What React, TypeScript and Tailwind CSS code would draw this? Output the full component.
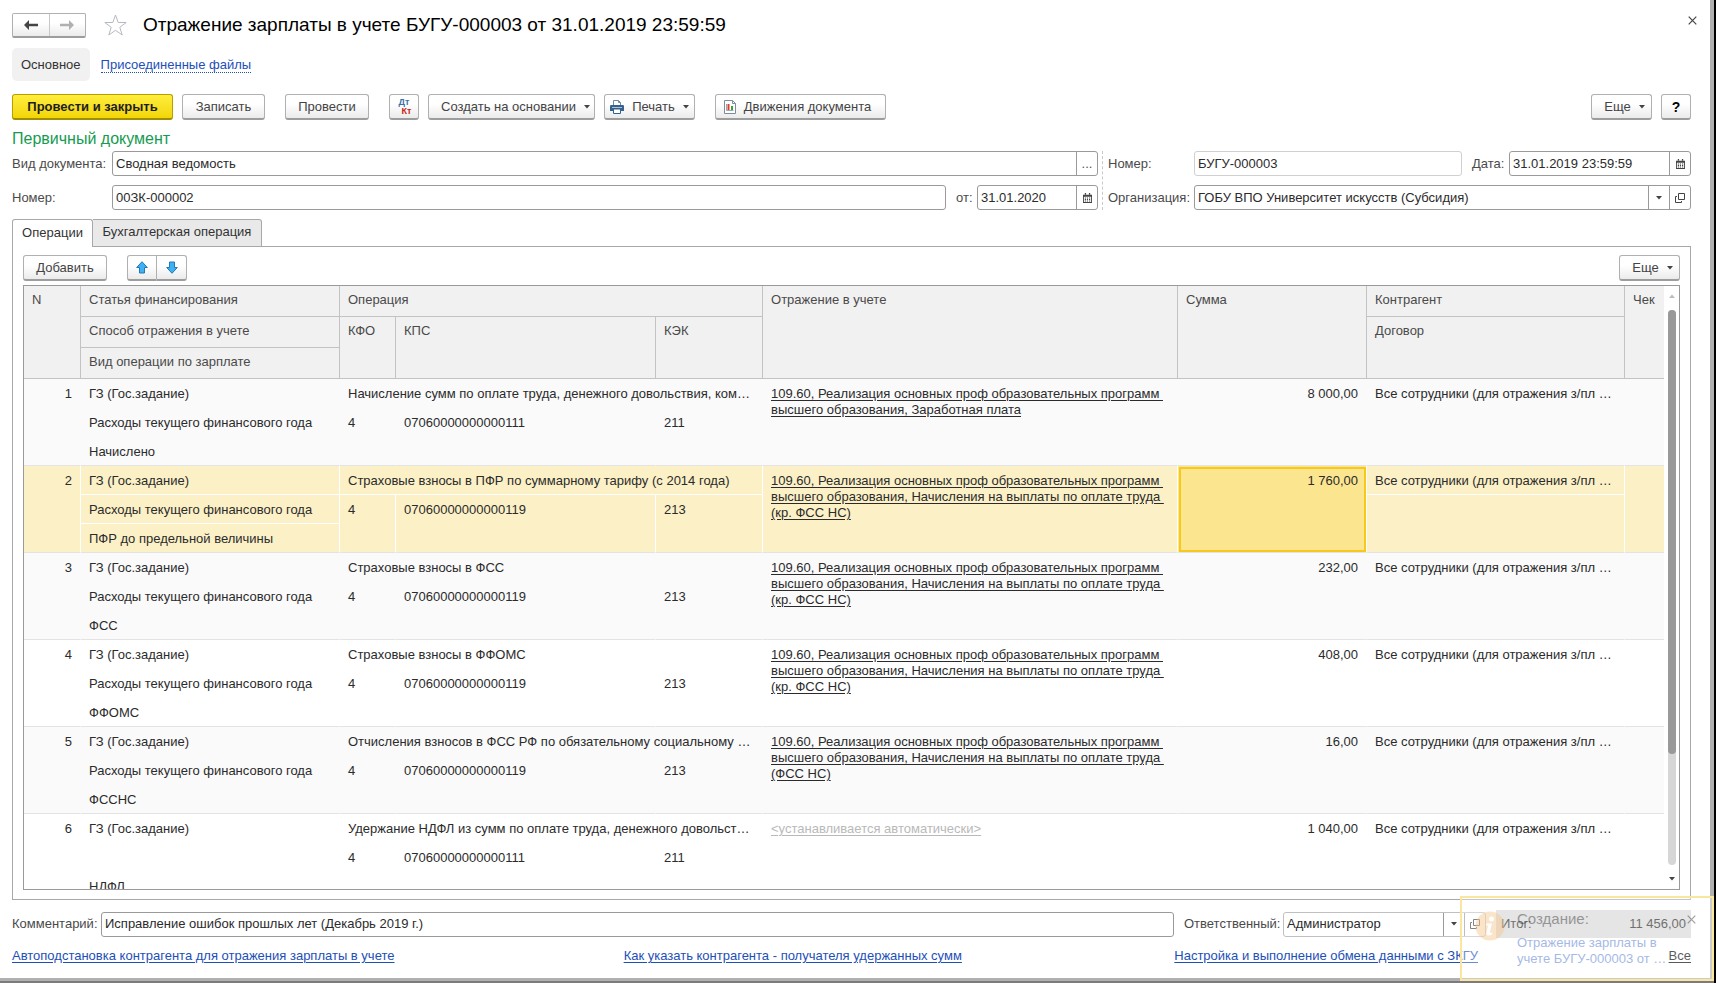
import { useState, type ReactNode } from "react";

type Entry = {
  n: number;
  article: string;
  method: string;
  kind: string;
  operation: string;
  kfo: string;
  kps: string;
  kek: string;
  posting: string;
  amount: string;
  contractor: string;
};

const PROGRAM = "109.60, Реализация основных проф образовательных программ \nвысшего образования, ";
const CONTRACTOR = "Все сотрудники (для отражения з/пл …";

const entries: Entry[] = [
  { n: 1, article: "ГЗ (Гос.задание)", method: "Расходы текущего финансового года", kind: "Начислено", operation: "Начисление сумм по оплате труда, денежного довольствия, ком…", kfo: "4", kps: "07060000000000111", kek: "211", posting: PROGRAM + "Заработная плата", amount: "8 000,00", contractor: CONTRACTOR },
  { n: 2, article: "ГЗ (Гос.задание)", method: "Расходы текущего финансового года", kind: "ПФР до предельной величины", operation: "Страховые взносы в ПФР по суммарному тарифу (с 2014 года)", kfo: "4", kps: "07060000000000119", kek: "213", posting: PROGRAM + "Начисления на выплаты по оплате труда \n(кр. ФСС НС)", amount: "1 760,00", contractor: CONTRACTOR },
  { n: 3, article: "ГЗ (Гос.задание)", method: "Расходы текущего финансового года", kind: "ФСС", operation: "Страховые взносы в ФСС", kfo: "4", kps: "07060000000000119", kek: "213", posting: PROGRAM + "Начисления на выплаты по оплате труда \n(кр. ФСС НС)", amount: "232,00", contractor: CONTRACTOR },
  { n: 4, article: "ГЗ (Гос.задание)", method: "Расходы текущего финансового года", kind: "ФФОМС", operation: "Страховые взносы в ФФОМС", kfo: "4", kps: "07060000000000119", kek: "213", posting: PROGRAM + "Начисления на выплаты по оплате труда \n(кр. ФСС НС)", amount: "408,00", contractor: CONTRACTOR },
  { n: 5, article: "ГЗ (Гос.задание)", method: "Расходы текущего финансового года", kind: "ФССНС", operation: "Отчисления взносов в ФСС РФ по обязательному социальному …", kfo: "4", kps: "07060000000000119", kek: "213", posting: PROGRAM + "Начисления на выплаты по оплате труда \n(ФСС НС)", amount: "16,00", contractor: CONTRACTOR },
  { n: 6, article: "ГЗ (Гос.задание)", method: "", kind: "НДФЛ", operation: "Удержание НДФЛ из сумм по оплате труда, денежного довольст…", kfo: "4", kps: "07060000000000111", kek: "211", posting: "", amount: "1 040,00", contractor: CONTRACTOR },
];

const buttonLook =
  "flex h-[26px] shrink-0 items-center justify-center whitespace-nowrap rounded-[3px] border border-[#b0b0b0] border-b-2 border-b-[#9d9d9d] bg-linear-to-b from-white from-40% to-[#ebebeb] text-[#444]";

function Button({ className = "", label, children }: { className?: string; label?: string; children: ReactNode }) {
  return (
    <button type="button" aria-label={label} className={`${buttonLook} ${className}`}>
      {children}
    </button>
  );
}

function Caret() {
  return (
    <svg width="6" height="4" viewBox="0 0 6 4" className="shrink-0" aria-hidden="true">
      <path d="M0 0h6L3 3.6z" fill="#444" />
    </svg>
  );
}

function CalendarIcon() {
  return (
    <svg width="9" height="10" viewBox="0 0 10 11" aria-hidden="true">
      <path d="M0 2h10v9H0z" fill="#444" />
      <path d="M2 0h1.4v2H2zM6.6 0H8v2H6.6z" fill="#444" />
      <path d="M1 4h8v6H1z" fill="#fff" />
      <path d="M2 5h1.3v1H2zM4.3 5h1.3v1H4.3zM6.7 5H8v1H6.7zM2 6.7h1.3v1H2zM4.3 6.7h1.3v1H4.3zM6.7 6.7H8v1H6.7zM2 8.3h1.3v1H2zM4.3 8.3h1.3v1H4.3zM6.7 8.3H8v1H6.7z" fill="#444" />
    </svg>
  );
}

function OpenIcon() {
  return (
    <svg width="10" height="10" viewBox="0 0 10 10" fill="none" stroke="#444" aria-hidden="true">
      <path d="M3.5 .5h6v6h-6z" />
      <path d="M2 3.5H.5v6h6V8" />
    </svg>
  );
}

function CrossIcon({ color }: { color: string }) {
  return (
    <svg width="9" height="9" viewBox="0 0 9 9" fill="none" stroke={color} strokeWidth="1.2" aria-hidden="true">
      <path d="M.7.7l7.6 7.6M8.3.7L.7 8.3" />
    </svg>
  );
}

function PrinterIcon() {
  return (
    <svg width="14" height="14" viewBox="0 0 14 14" aria-hidden="true">
      <path d="M3.5 6V.5h5L10.500 2.500V6" fill="#fff" stroke="#6f8aa3" />
      <path d="M8.500 .5v2h2" fill="none" stroke="#6f8aa3" />
      <path d="M1.200 5h11.600q1.200 0 1.200 1.200V11H0V6.200Q0 5 1.200 5z" fill="#35618e" />
      <path d="M2 7h10v1H2z" fill="#a9c3dc" />
      <path d="M3.500 9h7v4.500h-7z" fill="#fff" stroke="#35618e" />
    </svg>
  );
}

function ReportIcon() {
  return (
    <svg width="12" height="14" viewBox="0 0 12 14" aria-hidden="true">
      <path d="M.5 .5h8L11.500 3.500v10H.5z" fill="#fff" stroke="#7c8c9b" />
      <path d="M8.500 .5v3h3" fill="none" stroke="#7c8c9b" />
      <path d="M2.500 4v6.500h7" fill="none" stroke="#9aa6b0" />
      <path d="M3.500 4h2v6h-2z" fill="#e5382a" />
      <path d="M7 6h2v4H7z" fill="#35a23c" />
    </svg>
  );
}

function FieldButton({ label, children }: { label: string; children: ReactNode }) {
  return (
    <button type="button" aria-label={label} className="flex w-[21px] shrink-0 items-center justify-center border-l border-[#9a9a9a] text-[#555]">
      {children}
    </button>
  );
}

function Field({ id, value, className, look = "border-[#9a9a9a]", children }: { id: string; value: string; className: string; look?: string; children?: ReactNode }) {
  return (
    <div className={`flex h-[25px] overflow-hidden rounded-[3px] border bg-white ${look} ${className}`}>
      <input id={id} type="text" defaultValue={value} className="min-w-0 flex-1 px-[3px] text-[#2b2b2b] outline-none" />
      {children}
    </div>
  );
}

function HeadCell({ children, rows = 1, cols = 1, last = false }: { children: ReactNode; rows?: number; cols?: number; last?: boolean }) {
  return (
    <th
      rowSpan={rows}
      colSpan={cols}
      className={`h-[31px] border-b border-[#c3c3c3] bg-[#f1f1f1] px-2 pt-1.5 text-left align-top font-normal ${last ? "" : "border-r"}`}
    >
      {children}
    </th>
  );
}

function EntryRows({ entry, selected, onSelect }: { entry: Entry; selected: boolean; onSelect: () => void }) {
  const tone = selected ? "bg-[#fcf1c6]" : entry.n % 2 ? "bg-[#fafafa]" : "bg-white";
  const inner = selected ? "border-r border-b border-white" : "border-r border-b border-transparent";
  const outer = selected ? "border-r border-b border-r-white border-b-[#e3e3e3]" : "border-r border-b border-r-transparent border-b-[#e3e3e3]";
  const cell = "h-[29px] px-2 pt-[7px] align-top whitespace-nowrap overflow-hidden";
  return (
    <tbody className={tone} onClick={onSelect}>
      <tr>
        <td rowSpan={3} className={`${cell} ${outer} text-right`}>{entry.n}</td>
        <td className={`${cell} ${inner}`}>{entry.article}</td>
        <td colSpan={3} className={`${cell} ${inner}`}>{entry.operation}</td>
        <td rowSpan={3} className={`${cell} ${outer}`}>
          {entry.posting ? (
            <a href="#posting" className="whitespace-pre underline underline-offset-2">{entry.posting}</a>
          ) : (
            <a href="#posting" className="text-[#b9b9b9] underline underline-offset-2">&lt;устанавливается автоматически&gt;</a>
          )}
        </td>
        <td rowSpan={3} className={`${cell} ${outer} text-right ${selected ? "bg-[#fbe58e] outline-2 -outline-offset-3 outline-[#f7c91c]" : ""}`}>{entry.amount}</td>
        <td className={`${cell} ${inner}`}>{entry.contractor}</td>
        <td rowSpan={3} className={`${cell} border-b border-[#e3e3e3]`} />
      </tr>
      <tr>
        <td className={`${cell} ${inner}`}>{entry.method}</td>
        <td rowSpan={2} className={`${cell} ${outer}`}>{entry.kfo}</td>
        <td rowSpan={2} className={`${cell} ${outer}`}>{entry.kps}</td>
        <td rowSpan={2} className={`${cell} ${outer}`}>{entry.kek}</td>
        <td rowSpan={2} className={`${cell} ${outer}`} />
      </tr>
      <tr>
        <td className={`${cell} ${outer}`}>{entry.kind}</td>
      </tr>
    </tbody>
  );
}

function EntriesTable() {
  const [selected, setSelected] = useState(2);
  return (
    <div className="mt-1 flex min-h-0 flex-1 border border-[#9a9a9a]">
      <div className="min-w-0 flex-1 overflow-hidden">
        <table className="w-full table-fixed border-separate border-spacing-0 leading-4 text-[#2b2b2b]">
          <colgroup>
            <col className="w-[57px]" />
            <col className="w-[259px]" />
            <col className="w-[56px]" />
            <col className="w-[260px]" />
            <col className="w-[107px]" />
            <col />
            <col className="w-[189px]" />
            <col className="w-[258px]" />
            <col className="w-[39px]" />
          </colgroup>
          <thead className="text-[#4a4a4a]">
            <tr>
              <HeadCell rows={3}>N</HeadCell>
              <HeadCell>Статья финансирования</HeadCell>
              <HeadCell cols={3}>Операция</HeadCell>
              <HeadCell rows={3}>Отражение в учете</HeadCell>
              <HeadCell rows={3}>Сумма</HeadCell>
              <HeadCell>Контрагент</HeadCell>
              <HeadCell rows={3} last>Чек</HeadCell>
            </tr>
            <tr>
              <HeadCell>Способ отражения в учете</HeadCell>
              <HeadCell rows={2}>КФО</HeadCell>
              <HeadCell rows={2}>КПС</HeadCell>
              <HeadCell rows={2}>КЭК</HeadCell>
              <HeadCell rows={2}>Договор</HeadCell>
            </tr>
            <tr>
              <HeadCell>Вид операции по зарплате</HeadCell>
            </tr>
          </thead>
          {entries.map((entry) => (
            <EntryRows key={entry.n} entry={entry} selected={entry.n === selected} onSelect={() => setSelected(entry.n)} />
          ))}
        </table>
      </div>
      <div className="flex w-[15px] shrink-0 flex-col items-center py-2">
        <svg width="6" height="4" viewBox="0 0 6 4" aria-hidden="true">
          <path d="M0 4h6L3 .4z" fill="#bdbdbd" />
        </svg>
        <div className="my-3 w-2 flex-1 rounded-full bg-[#d6d6d6]">
          <div className="h-4/5 rounded-full bg-[#999]" />
        </div>
        <Caret />
      </div>
    </div>
  );
}

function Notification() {
  return (
    <div className="absolute right-0.5 bottom-0.5 h-[85px] w-[254px] border-2 border-[#fbe6a0] bg-white/35">
      <div className="flex gap-3 pt-[11px] pl-[13px] opacity-45">
        <svg width="30" height="30" viewBox="0 0 30 30" className="mt-0.5 shrink-0" aria-hidden="true">
          <circle cx="15" cy="15" r="14.500" fill="#f6c48c" />
          <circle cx="16.500" cy="8" r="2.500" fill="#fff" />
          <path d="M11.500 12.500h5.500l-2 8.500q0 1.500 2.500.5l-.5 2q-6.500 2.500-5.500-2l1.500-7h-2z" fill="#fff" />
        </svg>
        <div>
          <div className="text-[15px] leading-5 text-[#333]">Создание:</div>
          <a href="#document" className="mt-1.5 block leading-4 text-[#3465c8]">
            Отражение зарплаты в<br />учете БУГУ-000003 от …
          </a>
        </div>
      </div>
      <button type="button" aria-label="Закрыть уведомление" className="absolute top-[17px] right-4 opacity-50">
        <CrossIcon color="#444" />
      </button>
    </div>
  );
}

export default function App() {
  const link = "text-[#1d4fb8] underline underline-offset-2";
  return (
    <div className="relative h-screen bg-black pr-0.5 font-['Liberation_Sans',Arial,sans-serif] text-[13px] leading-4">
      <div className="h-full border-b-2 border-[#7b7b7b]">
        <div className="flex h-full flex-col border-r-4 border-b-3 border-[#b0b0b0] bg-white pt-3 pr-[19px] pl-3">
          <header className="flex items-center">
            <div className="flex h-[25px] w-[74px] rounded-[2px] border border-[#b0b0b0] border-b-2 border-b-[#9d9d9d] bg-linear-to-b from-white from-40% to-[#ebebeb]">
              <button type="button" aria-label="Назад" className="flex flex-1 items-center justify-center border-r border-[#c8c8c8]">
                <svg width="14" height="10" viewBox="0 0 14 10" aria-hidden="true">
                  <path d="M0 5l5-5v3.700h9v2.600H5V10z" fill="#444" />
                </svg>
              </button>
              <button type="button" aria-label="Вперед" className="flex flex-1 items-center justify-center">
                <svg width="14" height="10" viewBox="0 0 14 10" aria-hidden="true">
                  <path d="M14 5L9 0v3.700H0v2.600h9V10z" fill="#b0b0b0" />
                </svg>
              </button>
            </div>
            <button type="button" aria-label="Добавить в избранное" className="ml-[17px]">
              <svg width="25" height="24" viewBox="0 0 25 24" fill="none" stroke="#b4bac2" aria-hidden="true">
                <path d="M12.500 2l2.700 7.500h8l-6.400 4.800 2.400 7.700-6.700-4.700L5.800 22l2.400-7.700L1.800 9.500h8z" />
              </svg>
            </button>
            <h1 className="ml-[15px] text-[19px] leading-[26px] text-black">Отражение зарплаты в учете БУГУ-000003 от 31.01.2019 23:59:59</h1>
            <button type="button" aria-label="Закрыть" className="mt-1 mr-[-6px] ml-auto self-start">
              <CrossIcon color="#444" />
            </button>
          </header>

          <nav className="mt-2.5 flex items-center">
            <a href="#main" className="flex h-[33px] items-center rounded-[5px] bg-[#f1f1f1] px-[9px] text-[#333]">Основное</a>
            <a href="#files" className="ml-[11px] border-b border-dotted border-[#1d4fb8] leading-[15px] text-[#1d4fb8]">Присоединенные файлы</a>
          </nav>

          <div className="mt-[13px] flex">
            <button
              type="button"
              className="flex h-[26px] w-[161px] items-center justify-center rounded-[3px] border border-[#b5a000] border-b-2 border-b-[#a08e00] bg-linear-to-b from-[#ffee3a] to-[#f2d600] font-bold text-[#1e1e1e]"
            >
              Провести и закрыть
            </button>
            <Button className="ml-[9px] w-[83px]">Записать</Button>
            <Button className="ml-5 w-[84px]">Провести</Button>
            <Button className="ml-5 w-[30px]" label="Дт/Кт">
              <span className="flex w-[15px] flex-col text-[9px] leading-[9px] font-bold">
                <span className="text-[#3a6ea5]">Дт</span>
                <span className="text-right text-[#c81e14]">Кт</span>
              </span>
            </Button>
            <Button className="ml-[9px] w-[167px] gap-2 pl-2">
              Создать на основании
              <Caret />
            </Button>
            <Button className="ml-[9px] w-[91px] gap-2">
              <PrinterIcon />
              Печать
              <Caret />
            </Button>
            <Button className="ml-5 w-[171px] gap-2 pr-1.5">
              <ReportIcon />
              Движения документа
            </Button>
            <Button className="ml-auto w-[61px] gap-2 pl-1.5">
              Еще
              <Caret />
            </Button>
            <Button className="ml-[9px] w-[30px] text-sm font-bold text-black">?</Button>
          </div>

          <h2 className="mt-[9px] text-base leading-5 text-[#169b51]">Первичный документ</h2>

          <div className="mt-0.5 flex text-[#4a4a4a]">
            <div className="flex flex-1 flex-col gap-[9px]">
              <div className="flex items-center">
                <label htmlFor="doc-kind" className="w-[100px]">Вид документа:</label>
                <Field id="doc-kind" value="Сводная ведомость" className="flex-1">
                  <FieldButton label="Выбрать">...</FieldButton>
                </Field>
              </div>
              <div className="flex items-center">
                <label htmlFor="doc-number" className="w-[100px]">Номер:</label>
                <Field id="doc-number" value="00ЗК-000002" className="flex-1" />
                <label htmlFor="doc-date" className="w-[31px] pl-2.5">от:</label>
                <Field id="doc-date" value="31.01.2020" className="w-[121px]">
                  <FieldButton label="Календарь"><CalendarIcon /></FieldButton>
                </Field>
              </div>
            </div>
            <div className="ml-1 flex w-[589px] shrink-0 flex-col gap-[9px] border-l border-dashed border-[#c8c8c8] pl-[5px]">
              <div className="flex items-center">
                <label htmlFor="number" className="w-[86px]">Номер:</label>
                <Field id="number" value="БУГУ-000003" className="flex-1" look="border-[#d0d0d0]" />
                <label htmlFor="date" className="w-[47px] pl-2.5">Дата:</label>
                <Field id="date" value="31.01.2019 23:59:59" className="w-[182px]">
                  <FieldButton label="Календарь"><CalendarIcon /></FieldButton>
                </Field>
              </div>
              <div className="flex items-center">
                <label htmlFor="organization" className="w-[86px]">Организация:</label>
                <Field id="organization" value="ГОБУ ВПО Университет искусств (Субсидия)" className="flex-1">
                  <FieldButton label="Список"><Caret /></FieldButton>
                  <FieldButton label="Открыть"><OpenIcon /></FieldButton>
                </Field>
              </div>
            </div>
          </div>

          <div role="tablist" className="z-1 mt-[9px] flex h-7">
            <button type="button" role="tab" aria-selected="true" className="h-7 w-[81px] rounded-t-[3px] border border-b-0 border-[#a8a8a8] bg-white pb-0.5 text-[#333]">Операции</button>
            <button type="button" role="tab" aria-selected="false" className="h-7 w-[169px] rounded-tr-[3px] border border-l-0 border-[#a8a8a8] bg-[#e9e9e9] pb-0.5 text-[#333]">Бухгалтерская операция</button>
          </div>
          <section className="-mt-px flex min-h-0 flex-1 flex-col border border-[#a8a8a8] px-2.5 pt-2 pb-[9px]">
            <div className="flex">
              <Button className="w-[84px]">Добавить</Button>
              <Button className="ml-5 w-[30px] rounded-r-none" label="Переместить вверх">
                <svg width="12" height="13" viewBox="0 0 12 13" aria-hidden="true">
                  <path d="M6 .7l5.300 5.800H8.500V12h-5V6.500H.7z" fill="#3fb0f2" stroke="#1f78b8" />
                </svg>
              </Button>
              <Button className="w-[30px] rounded-l-none border-l-0" label="Переместить вниз">
                <svg width="12" height="13" viewBox="0 0 12 13" aria-hidden="true">
                  <path d="M6 12.300L.7 6.500h2.800V1h5v5.500h2.800z" fill="#3fb0f2" stroke="#1f78b8" />
                </svg>
              </Button>
              <Button className="ml-auto w-[61px] gap-2 pl-1.5">
                Еще
                <Caret />
              </Button>
            </div>
            <EntriesTable />
          </section>

          <div className="mt-2.5 flex items-center text-[#4a4a4a]">
            <label htmlFor="comment" className="w-[89px]">Комментарий:</label>
            <Field id="comment" value="Исправление ошибок прошлых лет (Декабрь 2019 г.)" className="flex-1" />
            <label htmlFor="responsible" className="w-[109px] pl-2.5">Ответственный:</label>
            <Field id="responsible" value="Администратор" className="w-[203px]" look="border-[#c0c0c0]">
              <FieldButton label="Список"><Caret /></FieldButton>
              <FieldButton label="Открыть"><OpenIcon /></FieldButton>
            </Field>
            <div className="ml-2.5 flex h-7 w-[195px] items-center justify-between bg-[#d8d8d8] px-[5px] text-[#222]">
              <span>Итог:</span>
              <output>11 456,00</output>
            </div>
          </div>

          <footer className="mt-2.5 mb-[14px] grid grid-cols-[612fr_551fr_517fr]">
            <div><a href="#contractor" className={link}>Автоподстановка контрагента для отражения зарплаты в учете</a></div>
            <div><a href="#recipient" className={link}>Как указать контрагента - получателя удержанных сумм</a></div>
            <div className="flex justify-between">
              <a href="#exchange" className={link}>Настройка и выполнение обмена данными с ЗКГУ</a>
              <a href="#all" className="text-black underline underline-offset-2">Все</a>
            </div>
          </footer>
        </div>
      </div>
      <Notification />
    </div>
  );
}
